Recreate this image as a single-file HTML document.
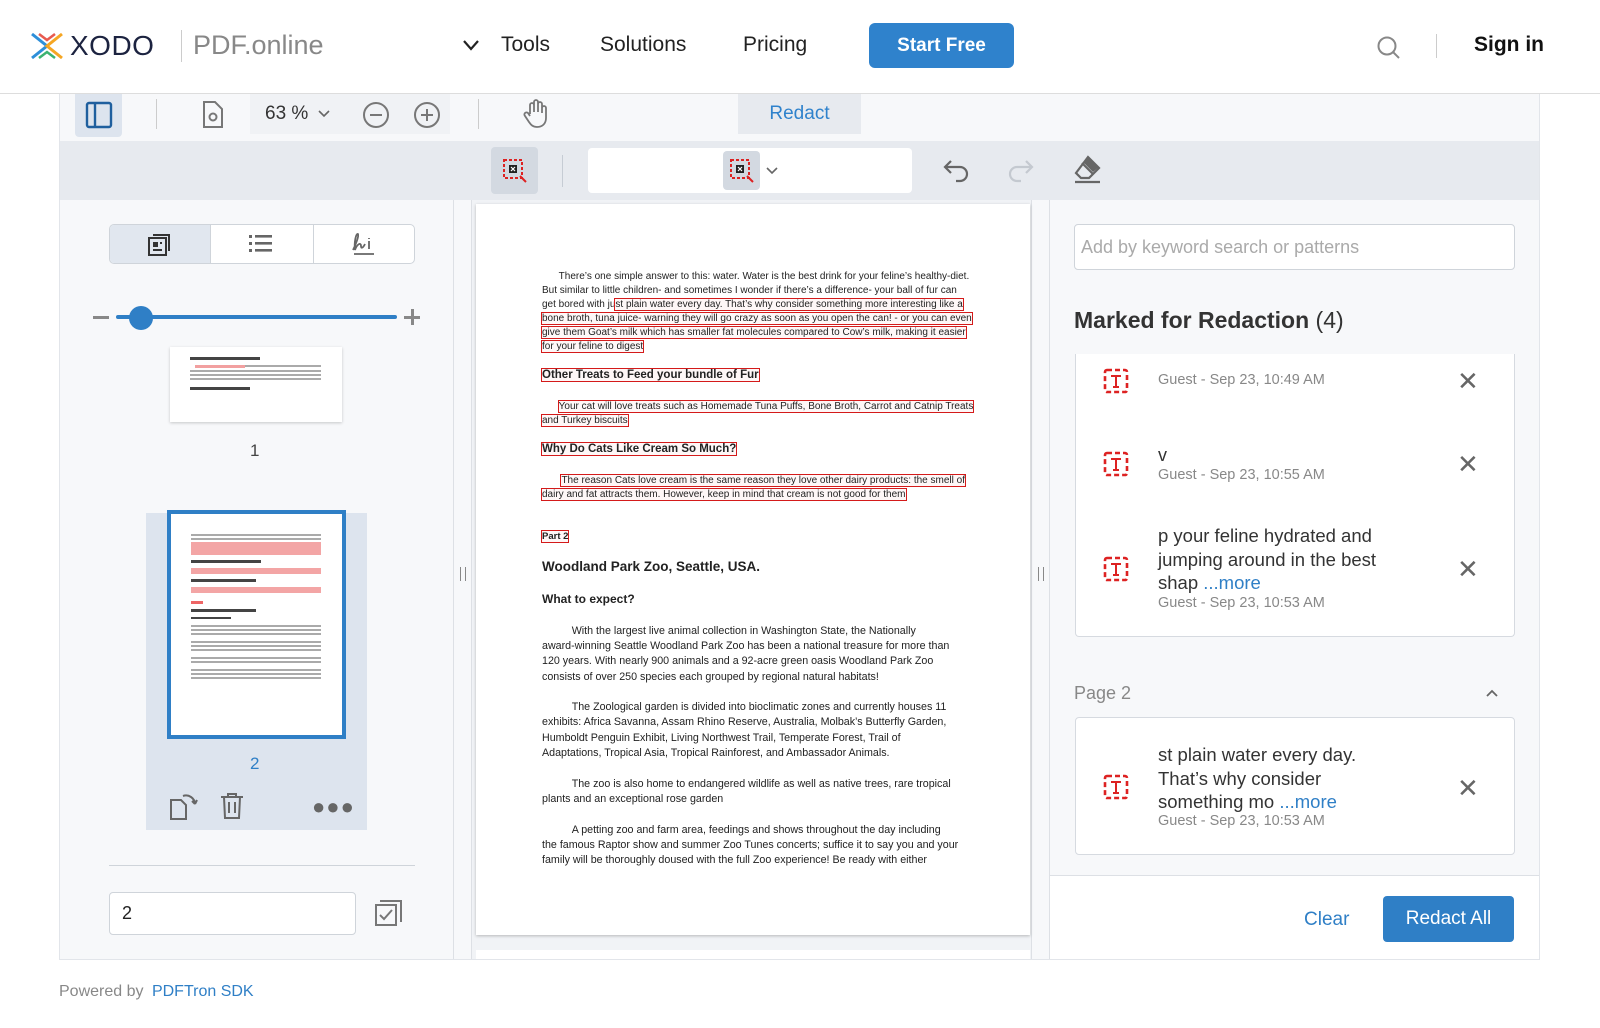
<!DOCTYPE html>
<html><head><meta charset="utf-8"><style>
*{box-sizing:border-box;margin:0;padding:0}
body{width:1600px;height:1028px;background:#fff;font-family:"Liberation Sans",sans-serif;position:relative;overflow:hidden;color:#222}
.a{position:absolute}
.nw{white-space:nowrap}
.dl{position:absolute;left:542px;font-size:10px;white-space:nowrap;color:#222;line-height:13px}
.dz{font-size:10.7px}
.rb{outline:1.3px solid #d41a1a;background:rgba(230,60,60,0.04)}
.x{position:absolute;font-size:26px;color:#666;line-height:20px}
.meta{color:#888;font-size:14.5px}
</style></head><body>
<svg class="a" style="left:29px;top:30px" width="36" height="32" viewBox="0 0 36 32">
<path d="M3 4 L18 16 L3 28" fill="none" stroke="#2e8fd9" stroke-width="3"/>
<path d="M33 4 L18 16 L33 28" fill="none" stroke="#f5a623" stroke-width="3"/>
<path d="M10 4 L18 10 L26 4" fill="none" stroke="#e85a4f" stroke-width="2.5"/>
<path d="M10 28 L18 22 L26 28" fill="none" stroke="#3cb371" stroke-width="2.5"/>
</svg>
<div class="a nw" style="left:70px;top:30px;font-size:28px;color:#1c2340;letter-spacing:0.5px">XODO</div>
<div class="a" style="left:181px;top:30px;width:1px;height:32px;background:#ccc"></div>
<div class="a nw" style="left:193px;top:30px;font-size:27px;color:#888">PDF.online</div>
<svg class="a" style="left:462px;top:39px" width="18" height="12"><path d="M2 2 L9 10 L16 2" fill="none" stroke="#222" stroke-width="2.2"/></svg>
<div class="a nw" style="left:501px;top:33px;font-size:21px">Tools</div>
<div class="a nw" style="left:600px;top:33px;font-size:21px">Solutions</div>
<div class="a nw" style="left:743px;top:33px;font-size:21px">Pricing</div>
<div class="a" style="left:869px;top:23px;width:145px;height:45px;background:#2f82cc;border-radius:6px;color:#fff;font-size:19px;font-weight:bold;text-align:center;line-height:45px">Start Free</div>
<svg class="a" style="left:1376px;top:35px" width="26" height="26"><circle cx="11" cy="11" r="8.5" fill="none" stroke="#888" stroke-width="2"/><path d="M17 17 L23 23" stroke="#888" stroke-width="2"/></svg>
<div class="a" style="left:1436px;top:34px;width:1px;height:24px;background:#ccc"></div>
<div class="a nw" style="left:1474px;top:33px;font-size:21px;font-weight:bold;color:#111">Sign in</div>
<div class="a" style="left:0;top:93px;width:1600px;height:1px;background:#ddd"></div>

<div class="a" style="left:59px;top:94px;width:1481px;height:866px;border:1px solid #e2e5ea;border-top:none;background:#f7f8fa"></div>
<div class="a" style="left:75px;top:94px;width:47px;height:43px;background:#dde4ee;border-radius:0 0 4px 4px"></div>
<svg class="a" style="left:84px;top:100px" width="30" height="30"><rect x="3" y="3" width="24" height="24" rx="2" fill="none" stroke="#1f5f9e" stroke-width="2.4"/><path d="M11 3 V27" stroke="#1f5f9e" stroke-width="2.4"/></svg>
<div class="a" style="left:156px;top:99px;width:1px;height:30px;background:#ccc"></div>
<svg class="a" style="left:200px;top:100px" width="26" height="30"><path d="M4 2 H15 L22 9 V27 H4 Z" fill="none" stroke="#777" stroke-width="2"/><circle cx="13" cy="17" r="3.5" fill="none" stroke="#777" stroke-width="2"/></svg>
<div class="a" style="left:250px;top:94px;width:200px;height:40px;background:#f0f2f5"></div>
<div class="a nw" style="left:265px;top:103px;font-size:19px;color:#333">63 %</div>
<svg class="a" style="left:318px;top:109px" width="12" height="9"><path d="M1 2 L6 7 L11 2" fill="none" stroke="#666" stroke-width="1.6"/></svg>
<svg class="a" style="left:361px;top:100px" width="30" height="30"><circle cx="15" cy="15" r="12" fill="none" stroke="#777" stroke-width="2"/><path d="M9 15 H21" stroke="#777" stroke-width="2"/></svg>
<svg class="a" style="left:412px;top:100px" width="30" height="30"><circle cx="15" cy="15" r="12" fill="none" stroke="#777" stroke-width="2"/><path d="M9 15 H21 M15 9 V21" stroke="#777" stroke-width="2"/></svg>
<div class="a" style="left:478px;top:99px;width:1px;height:30px;background:#ccc"></div>
<svg class="a" style="left:521px;top:98px" width="30" height="32"><path d="M9 16 V7 a2 2 0 0 1 4 0 V14 V4 a2 2 0 0 1 4 0 V14 V6 a2 2 0 0 1 4 0 V15 V10 a2 2 0 0 1 4 0 V20 c0 6 -4 9 -9 9 c-4 0 -6 -2 -8 -5 L4 18 a2 2 0 0 1 3 -3 L9 18" fill="none" stroke="#777" stroke-width="1.8"/></svg>
<div class="a" style="left:738px;top:94px;width:123px;height:40px;background:#e7eaef;color:#2f82cc;font-size:19px;text-align:center;line-height:40px">Redact</div>
<div class="a" style="left:60px;top:141px;width:1479px;height:59px;background:#e7eaef"></div>
<div class="a" style="left:491px;top:147px;width:47px;height:47px;background:#d3d9e1;border-radius:4px"></div>
<svg class="a" style="left:502px;top:158px" width="26" height="26"><rect x="2" y="2" width="18" height="18" fill="none" stroke="#d22" stroke-width="2" stroke-dasharray="3 2"/><rect x="7" y="7" width="8" height="8" fill="#222"/><path d="M9 9 L13 13 M13 9 L9 13" stroke="#fff" stroke-width="1.2"/><path d="M18 18 L24 24" stroke="#d22" stroke-width="2"/></svg>
<div class="a" style="left:562px;top:155px;width:1px;height:32px;background:#c6ccd4"></div>
<div class="a" style="left:588px;top:148px;width:324px;height:45px;background:#fff;border-radius:4px"></div>
<div class="a" style="left:723px;top:151px;width:37px;height:39px;background:#d3d9e1;border-radius:4px"></div>
<svg class="a" style="left:729px;top:158px" width="26" height="26"><rect x="2" y="2" width="18" height="18" fill="none" stroke="#d22" stroke-width="2" stroke-dasharray="3 2"/><rect x="7" y="7" width="8" height="8" fill="#222"/><path d="M9 9 L13 13 M13 9 L9 13" stroke="#fff" stroke-width="1.2"/><path d="M18 18 L24 24" stroke="#d22" stroke-width="2"/></svg>
<svg class="a" style="left:766px;top:166px" width="12" height="9"><path d="M1 2 L6 7 L11 2" fill="none" stroke="#666" stroke-width="1.6"/></svg>
<svg class="a" style="left:942px;top:156px" width="30" height="28"><path d="M9 5 L3 11 L9 17 M3 11 H18 a7 7 0 0 1 0 14 H14" fill="none" stroke="#666" stroke-width="2.2"/></svg>
<svg class="a" style="left:1005px;top:156px" width="30" height="28"><path d="M21 5 L27 11 L21 17 M27 11 H12 a7 7 0 0 0 0 14 H16" fill="none" stroke="#c4c9d0" stroke-width="2.2"/></svg>
<svg class="a" style="left:1072px;top:154px" width="30" height="32"><path d="M16 3 L27 14 L17 24 H9 L4 19 Z" fill="none" stroke="#666" stroke-width="2.2"/><path d="M10 9 L21 20" stroke="#666" stroke-width="2.2"/><path d="M12 9 L21 18 L27 13 L16 3 Z" fill="#666"/><path d="M3 28 H28" stroke="#666" stroke-width="2.2"/></svg>

<div class="a" style="left:453px;top:200px;width:1px;height:759px;background:#dde0e5"></div>
<div class="a" style="left:109px;top:224px;width:306px;height:40px;border:1px solid #cfd4da;border-radius:5px;background:#fff"></div>
<div class="a" style="left:110px;top:225px;width:101px;height:38px;background:#e1e7ef;border-radius:4px 0 0 4px;border-right:1px solid #cfd4da"></div>
<div class="a" style="left:313px;top:225px;width:1px;height:38px;background:#cfd4da"></div>
<svg class="a" style="left:146px;top:232px" width="26" height="26"><rect x="3" y="6" width="17" height="17" fill="none" stroke="#333" stroke-width="2"/><path d="M7 3 H23 V19" fill="none" stroke="#333" stroke-width="2"/><rect x="7" y="10" width="5" height="5" fill="#333"/><path d="M7 18 H16 M14 11 H16" stroke="#333" stroke-width="2"/></svg>
<svg class="a" style="left:248px;top:232px" width="26" height="24"><g fill="#666"><rect x="1" y="3" width="3" height="3"/><rect x="1" y="10" width="3" height="3"/><rect x="1" y="17" width="3" height="3"/><rect x="7" y="3" width="17" height="2.6"/><rect x="7" y="10" width="17" height="2.6"/><rect x="7" y="17" width="17" height="2.6"/></g></svg>
<svg class="a" style="left:350px;top:230px" width="28" height="28"><path d="M3 20 C6 14 9 6 8 4 C6 3 4 12 5 20 C7 14 11 12 11 16 C11 19 13 18 15 14 M19 11 V19 M19 8 V9" fill="none" stroke="#666" stroke-width="1.8"/><path d="M4 24 H24" stroke="#666" stroke-width="1.8"/></svg>
<div class="a" style="left:93px;top:316px;width:16px;height:2.5px;background:#888"></div>
<div class="a" style="left:116px;top:315px;width:281px;height:4px;background:#2f7fc6;border-radius:2px"></div>
<div class="a" style="left:129px;top:306px;width:24px;height:24px;border-radius:50%;background:#2f7fc6"></div>
<div class="a" style="left:404px;top:316px;width:16px;height:2.5px;background:#888"></div>
<div class="a" style="left:411px;top:309px;width:2.5px;height:16px;background:#888"></div>
<div class="a" style="left:170px;top:347px;width:172px;height:75px;background:#fff;box-shadow:0 1px 3px rgba(0,0,0,.2);overflow:hidden">
<div class="a" style="left:20px;top:10px;width:70px;height:3px;background:#444"></div>
<div class="a" style="left:25px;top:18px;width:50px;height:3px;background:#f2a0a0"></div>
<div class="a" style="left:75px;top:18px;width:76px;height:2px;background:#aaa"></div>
<div class="a" style="left:20px;top:23px;width:131px;height:2px;background:#aaa"></div>
<div class="a" style="left:20px;top:27px;width:131px;height:2px;background:#aaa"></div>
<div class="a" style="left:20px;top:31px;width:131px;height:2px;background:#aaa"></div>
<div class="a" style="left:20px;top:40px;width:60px;height:3px;background:#444"></div>
</div>
<div class="a" style="left:250px;top:441px;font-size:17px;color:#444">1</div>
<div class="a" style="left:146px;top:513px;width:221px;height:317px;background:#dde4ee"></div>
<div class="a" style="left:167px;top:510px;width:179px;height:229px;background:#fff;border:4px solid #2f7fc6;overflow:hidden">
<div style="position:absolute;left:20px;top:20px;width:130px">
<div style="height:2px;background:#aaa;margin-bottom:2px"></div><div style="height:2px;background:#aaa;margin-bottom:2px"></div>
<div style="height:13px;background:#f3a5a5;margin-bottom:5px"></div>
<div style="height:3px;width:70px;background:#444;margin-bottom:5px"></div>
<div style="height:6px;background:#f3a5a5;margin-bottom:5px"></div>
<div style="height:3px;width:65px;background:#444;margin-bottom:5px"></div>
<div style="height:6px;background:#f3a5a5;margin-bottom:8px"></div>
<div style="height:3px;width:12px;background:#e66;margin-bottom:5px"></div>
<div style="height:3px;width:65px;background:#444;margin-bottom:5px"></div>
<div style="height:2px;width:40px;background:#444;margin-bottom:6px"></div>
<div style="height:2px;background:#aaa;margin-bottom:2px"></div><div style="height:2px;background:#aaa;margin-bottom:2px"></div><div style="height:2px;background:#aaa;margin-bottom:6px"></div>
<div style="height:2px;background:#aaa;margin-bottom:2px"></div><div style="height:2px;background:#aaa;margin-bottom:2px"></div><div style="height:2px;background:#aaa;margin-bottom:6px"></div>
<div style="height:2px;background:#aaa;margin-bottom:2px"></div><div style="height:2px;background:#aaa;margin-bottom:6px"></div>
<div style="height:2px;background:#aaa;margin-bottom:2px"></div><div style="height:2px;background:#aaa;margin-bottom:2px"></div><div style="height:2px;background:#aaa"></div>
</div></div>
<div class="a" style="left:250px;top:754px;font-size:17px;color:#2f7fc6">2</div>
<svg class="a" style="left:168px;top:792px" width="32" height="30"><path d="M3 8 H13 L18 13 V27 H3 Z" fill="none" stroke="#666" stroke-width="2"/><path d="M15 4 a9 9 0 0 1 12 8 M27 12 L24 9 M27 12 L29 8" fill="none" stroke="#666" stroke-width="2"/></svg>
<svg class="a" style="left:218px;top:791px" width="28" height="30"><path d="M3 6 H25 M10 6 V3 H18 V6 M6 6 L7 27 H21 L22 6 M11 11 V22 M17 11 V22" fill="none" stroke="#666" stroke-width="2"/></svg>
<div class="a" style="left:312px;top:802px;font-size:22px;color:#666;letter-spacing:1px;line-height:10px">&#9679;&#9679;&#9679;</div>
<div class="a" style="left:109px;top:865px;width:306px;height:1px;background:#cfd4da"></div>
<div class="a" style="left:109px;top:892px;width:247px;height:43px;border:1px solid #cfd4da;border-radius:4px;background:#fff;font-size:18px;line-height:41px;padding-left:12px;color:#222">2</div>
<svg class="a" style="left:373px;top:898px" width="32" height="32"><path d="M7 3 H28 V24" fill="none" stroke="#777" stroke-width="2"/><rect x="3" y="7" width="20" height="20" fill="none" stroke="#777" stroke-width="2"/><path d="M7 17 L11 21 L19 12" fill="none" stroke="#777" stroke-width="2"/></svg>

<div class="a" style="left:460px;top:567px;height:14px;border-left:1.5px solid #888;border-right:1.5px solid #888;width:6px"></div>
<div class="a" style="left:1038px;top:567px;width:6px;height:14px;border-left:1.5px solid #888;border-right:1.5px solid #888"></div>
<div class="a" style="left:471px;top:200px;width:1px;height:759px;background:#dde0e5"></div>
<div class="a" style="left:1031px;top:200px;width:1px;height:759px;background:#dde0e5"></div>
<div class="a" style="left:1049px;top:200px;width:1px;height:759px;background:#dde0e5"></div>
<div class="a" style="left:472px;top:200px;width:559px;height:759px;background:#f1f3f6"></div>
<div class="a" style="left:476px;top:204px;width:554px;height:731px;background:#fff;box-shadow:0 1px 3px rgba(0,0,0,.25)"></div>
<div class="a" style="left:476px;top:950px;width:554px;height:9px;background:#fff"></div>

<div class="dl" style="top:270px">&nbsp;&nbsp;&nbsp;&nbsp;&nbsp;&nbsp;There’s one simple answer to this: water. Water is the best drink for your feline’s healthy-diet.</div>
<div class="dl" style="top:284px">But similar to little children- and sometimes I wonder if there’s a difference- your ball of fur can</div>
<div class="dl" style="top:298px">get bored with ju<span class="rb">st plain water every day. That’s why consider something more interesting like a</span></div>
<div class="dl" style="top:312px"><span class="rb">bone broth, tuna juice- warning they will go crazy as soon as you open the can! - or you can even</span></div>
<div class="dl" style="top:326px"><span class="rb">give them Goat’s milk which has smaller fat molecules compared to Cow’s milk, making it easier</span></div>
<div class="dl" style="top:340px"><span class="rb">for your feline to digest</span></div>
<div class="dl" style="top:369px;font-weight:bold;font-size:11.5px"><span class="rb">Other Treats to Feed your bundle of Fur</span></div>
<div class="dl" style="top:400px">&nbsp;&nbsp;&nbsp;&nbsp;&nbsp;&nbsp;<span class="rb">Your cat will love treats such as Homemade Tuna Puffs, Bone Broth, Carrot and Catnip Treats</span></div>
<div class="dl" style="top:414px"><span class="rb">and Turkey biscuits</span></div>
<div class="dl" style="top:443px;font-weight:bold;font-size:11.5px"><span class="rb">Why Do Cats Like Cream So Much?</span></div>
<div class="dl" style="top:474px">&nbsp;&nbsp;&nbsp;&nbsp;&nbsp;&nbsp;&nbsp;<span class="rb">The reason Cats love cream is the same reason they love other dairy products: the smell of</span></div>
<div class="dl" style="top:488px"><span class="rb">dairy and fat attracts  them. However, keep in mind that cream is not good for them</span></div>
<div class="dl" style="top:530px;font-weight:bold;font-size:9.5px"><span class="rb">Part 2</span></div>
<div class="dl" style="top:559px;font-weight:bold;font-size:13.5px;line-height:16px">Woodland Park Zoo, Seattle, USA.</div>
<div class="dl" style="top:593px;font-weight:bold;font-size:12px">What to expect?</div>
<div class="dl dz" style="top:625px">&nbsp;&nbsp;&nbsp;&nbsp;&nbsp;&nbsp;&nbsp;&nbsp;&nbsp;&nbsp;With the largest live animal collection in Washington State, the Nationally</div>
<div class="dl dz" style="top:640px">award-winning Seattle Woodland Park Zoo has been a national treasure for more than</div>
<div class="dl dz" style="top:655px">120 years. With nearly 900 animals and a 92-acre green oasis Woodland Park Zoo</div>
<div class="dl dz" style="top:671px">consists of over 250 species each grouped by regional natural habitats!</div>
<div class="dl dz" style="top:701px">&nbsp;&nbsp;&nbsp;&nbsp;&nbsp;&nbsp;&nbsp;&nbsp;&nbsp;&nbsp;The Zoological garden is divided into bioclimatic zones and currently houses  11</div>
<div class="dl dz" style="top:716px">exhibits: Africa Savanna, Assam Rhino Reserve, Australia, Molbak’s Butterfly Garden,</div>
<div class="dl dz" style="top:732px">Humboldt Penguin Exhibit, Living Northwest Trail, Temperate Forest, Trail of</div>
<div class="dl dz" style="top:747px">Adaptations, Tropical Asia, Tropical Rainforest, and Ambassador Animals.</div>
<div class="dl dz" style="top:778px">&nbsp;&nbsp;&nbsp;&nbsp;&nbsp;&nbsp;&nbsp;&nbsp;&nbsp;&nbsp;The zoo is  also home to endangered wildlife as well as native trees, rare tropical</div>
<div class="dl dz" style="top:793px">plants and an exceptional rose garden</div>
<div class="dl dz" style="top:824px">&nbsp;&nbsp;&nbsp;&nbsp;&nbsp;&nbsp;&nbsp;&nbsp;&nbsp;&nbsp;A petting zoo and farm area, feedings and shows throughout the day including</div>
<div class="dl dz" style="top:839px">the famous Raptor show and summer Zoo Tunes concerts; suffice it to say you and your</div>
<div class="dl dz" style="top:854px">family will be thoroughly doused with the full Zoo experience! Be ready with either</div>

<div class="a" style="left:1074px;top:224px;width:441px;height:46px;border:1px solid #cfd4da;border-radius:4px;background:#fff;font-size:18px;color:#aaa;line-height:44px;padding-left:6px" >Add by keyword search or patterns</div>
<div class="a nw" style="left:1074px;top:307px;font-size:23px;font-weight:bold;color:#333">Marked for Redaction <span style="font-weight:normal">(4)</span></div>
<div class="a" style="left:1075px;top:354px;width:440px;height:283px;background:#fff;border:1px solid #d6dae0;border-top:none;border-radius:0 0 4px 4px"></div>
<div class="a" style="left:1075px;top:717px;width:440px;height:138px;background:#fff;border:1px solid #d6dae0;border-radius:4px"></div>

<svg width="0" height="0" style="position:absolute"><defs><g id="ti"><rect x="2" y="2" width="22" height="22" rx="2" fill="none" stroke="#d22" stroke-width="2.6" stroke-dasharray="5 3"/><path d="M8 8 H18 M13 8 V19 M10 19 H16" stroke="#d22" stroke-width="2" fill="none"/></g></defs></svg>
<svg class="a" style="left:1103px;top:368px" width="26" height="26"><use href="#ti"/></svg>
<div class="a nw meta" style="left:1158px;top:372px">Guest - Sep 23, 10:49 AM</div>
<div class="x" style="left:1457px;top:371px">✕</div>

<svg class="a" style="left:1103px;top:451px" width="26" height="26"><use href="#ti"/></svg>
<div class="a nw" style="left:1158px;top:445px;font-size:18px;color:#333">v</div>
<div class="a nw meta" style="left:1158px;top:467px">Guest - Sep 23, 10:55 AM</div>
<div class="x" style="left:1457px;top:454px">✕</div>

<svg class="a" style="left:1103px;top:556px" width="26" height="26"><use href="#ti"/></svg>
<div class="a" style="left:1158px;top:524px;font-size:18.5px;color:#333;line-height:23.5px;width:260px">p your feline hydrated and jumping around in the best shap <span style="color:#2f7fc6">...more</span></div>
<div class="a nw meta" style="left:1158px;top:595px">Guest - Sep 23, 10:53 AM</div>
<div class="x" style="left:1457px;top:559px">✕</div>

<div class="a nw" style="left:1074px;top:683px;font-size:18px;color:#888">Page 2</div>
<svg class="a" style="left:1485px;top:688px" width="14" height="10"><path d="M2 8 L7 3 L12 8" fill="none" stroke="#666" stroke-width="1.8"/></svg>
<svg class="a" style="left:1103px;top:774px" width="26" height="26"><use href="#ti"/></svg>
<div class="a" style="left:1158px;top:743px;font-size:18.5px;color:#333;line-height:23.5px;width:220px">st plain water every day. That’s why consider something mo <span style="color:#2f7fc6">...more</span></div>
<div class="a nw meta" style="left:1158px;top:813px">Guest - Sep 23, 10:53 AM</div>
<div class="x" style="left:1457px;top:778px">✕</div>

<div class="a" style="left:1050px;top:875px;width:489px;height:84px;background:#fff;border-top:1px solid #dde0e5"></div>
<div class="a nw" style="left:1304px;top:909px;font-size:19px;color:#2f7fc6">Clear</div>
<div class="a" style="left:1383px;top:896px;width:131px;height:46px;background:#2f7fc6;border-radius:4px;color:#fff;font-size:19px;text-align:center;line-height:46px">Redact All</div>

<div class="a nw" style="left:59px;top:983px;font-size:16px;color:#888">Powered by <span style="color:#2f7fc6;margin-left:4px">PDFTron SDK</span></div>
</body></html>
